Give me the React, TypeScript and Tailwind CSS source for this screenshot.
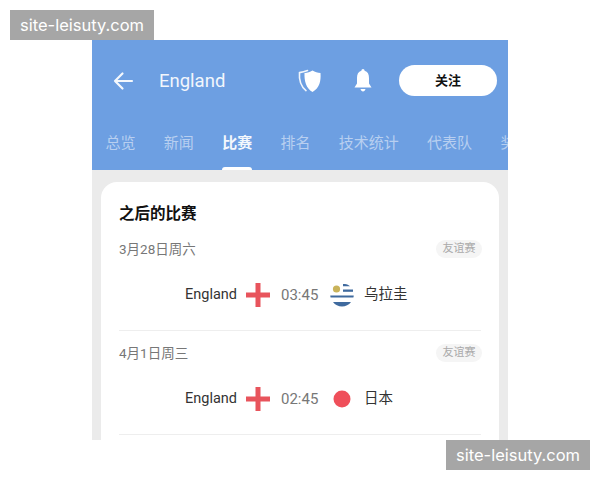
const sans = "font-['Roboto','Noto_Sans_CJK_SC',sans-serif]";

function Back() {
  return (
    <svg width="22" height="22" viewBox="0 0 22 22" fill="none" stroke="#f4f8fd" strokeWidth="2.2" strokeLinecap="round" strokeLinejoin="round">
      <path d="M20 11H3M10.5 3.5 3 11l7.5 7.5" />
    </svg>
  );
}

function Shield() {
  return (
    <svg width="26" height="26" viewBox="0 0 26 26">
      <path d="M10.5 2.500C8 3.400 6 4 2.500 4.600c-.6 7 .5 13 6.500 18" fill="none" stroke="#f2f6fc" strokeWidth="1.6" strokeLinecap="round" />
      <path d="M15.500 2.400c2.600 1.600 5 2.300 8 2.600.6 8-.9 15-8 19-6.500-3.800-8.300-11-8-19 3-.4 5.500-1 8-2.600Z" fill="#fff" />
    </svg>
  );
}

function Bell() {
  return (
    <svg width="22" height="24" viewBox="0 0 22 24" fill="#fff">
      <path d="M11 0c1 0 1.500.7 1.600 1.800C15.800 2.700 17 5.400 17 9v5.500l2.500 4h-17l2.500-4V9c0-3.600 1.200-6.300 4.400-7.200C9.500.7 10 0 11 0Z" />
      <path d="M8.500 20h5c-.4 1.500-1.300 2.500-2.500 2.500S8.900 21.500 8.500 20Z" />
    </svg>
  );
}

function England() {
  return (
    <svg width="24" height="24" viewBox="0 0 24 24">
      <path d="M9.500 0h5v9.500H24v5h-9.500V24h-5v-9.500H0v-5h9.500Z" fill="#e8545c" />
    </svg>
  );
}

function Uruguay() {
  return (
    <svg width="24" height="24" viewBox="0 0 24 24">
      <circle cx="6.500" cy="6" r="3.600" fill="#c9b35a" />
      <path d="M13 1h2c2 .2 3.800 1 5 2.200h-7Z" fill="#3f6a9e" />
      <path d="M13 6.500h10v2.300H13Z" fill="#3f6a9e" />
      <path d="M.3 12.500h23.400c0 .7-.1 1.300-.3 2H.6c-.2-.7-.3-1.300-.3-2Z" fill="#3f6a9e" />
      <path d="M3 19h18c-2 2.800-5.400 4.500-9 4.500S5 21.800 3 19Z" fill="#3f6a9e" />
    </svg>
  );
}

function Japan() {
  return (
    <svg width="24" height="24" viewBox="0 0 24 24">
      <circle cx="12" cy="12" r="8.500" fill="#ef4f5a" />
    </svg>
  );
}

function Match({ date, time, away, flag }: { date: string; time: string; away: string; flag: React.ReactNode }) {
  return (
    <div className="h-[91px] border-b border-[#eeeeee] flex flex-col">
      <div className="flex items-center justify-between h-[18px]">
        <span className="text-[13.500px] leading-[18px] text-[#777777]">{date}</span>
        <span className="h-[18px] w-[46px] rounded-full bg-[#f5f5f5] text-[11px] leading-[18px] text-center text-[#aaaaaa] mr-[-1px]">友谊赛</span>
      </div>
      <div className="flex items-center mt-[25px] ml-[52px] h-[24px] text-[14.500px] text-[#333333]">
        <span className="w-[66px] text-right">England</span>
        <span className="ml-[9px] w-[24px]"><England /></span>
        <span className="ml-[11px] w-[40px] text-[15px] text-[#777777]">{time}</span>
        <span className="ml-[9px] w-[24px]">{flag}</span>
        <span className="ml-[10px]">{away}</span>
      </div>
    </div>
  );
}

function Mark({ className }: { className: string }) {
  return (
    <div className={`absolute w-[144px] h-[30px] bg-[#a6a6a6] text-white text-[16.500px] leading-[30px] text-center font-['Inter',sans-serif] ${className}`}>
      site-leisuty.com
    </div>
  );
}

export default function App() {
  const tabs = ["总览", "新闻", "比赛", "排名", "技术统计", "代表队"];
  return (
    <div className={`relative w-[600px] h-[480px] bg-white overflow-hidden pt-[40px] ${sans}`}>
      <div className="mx-auto w-[416px] h-[400px] bg-[#ebebeb] overflow-hidden">
        <div className="h-[130px] bg-[#6d9fe2] pt-[25px]">
          <div className="flex items-center h-[31px]">
            <span className="ml-[20px]"><Back /></span>
            <span className="ml-[25px] mt-[2px] w-[66px] text-[18.500px] text-[#f2f6fc]">England</span>
            <span className="ml-[72px]"><Shield /></span>
            <span className="ml-[29px]"><Bell /></span>
            <span className="ml-[25px] w-[98px] h-[31px] rounded-full bg-white text-[13px] font-bold leading-[31px] text-center text-[#111111]">关注</span>
          </div>
          <div className="flex gap-[28.300px] pl-[13.500px] mt-[36px] h-[38px] whitespace-nowrap overflow-hidden">
            {tabs.map((t) => (
              <span key={t} className={`flex flex-col justify-between text-[15px] leading-[22px] ${t === "比赛" ? "font-bold text-[#f4f8fd]" : "text-[#b8cff0]"}`}>
                {t}
                {t === "比赛" && <i className="block h-[3px] rounded-t-[3px] bg-white" />}
              </span>
            ))}
            <span className="text-[15px] leading-[22px] text-[#b8cff0]">奖</span>
          </div>
        </div>
        <div className="mt-[12px] mx-[9px] h-[300px] rounded-[16px] bg-white px-[18px] pt-[22px]">
          <div className="text-[15.500px] leading-[20px] font-bold text-[#111111]">之后的比赛</div>
          <div className="mt-[16px] flex flex-col gap-[13px]">
            <Match date="3月28日周六" time="03:45" away="乌拉圭" flag={<Uruguay />} />
            <Match date="4月1日周三" time="02:45" away="日本" flag={<Japan />} />
          </div>
        </div>
      </div>
      <Mark className="left-[10px] top-[10px]" />
      <Mark className="left-[446px] top-[440px]" />
    </div>
  );
}
